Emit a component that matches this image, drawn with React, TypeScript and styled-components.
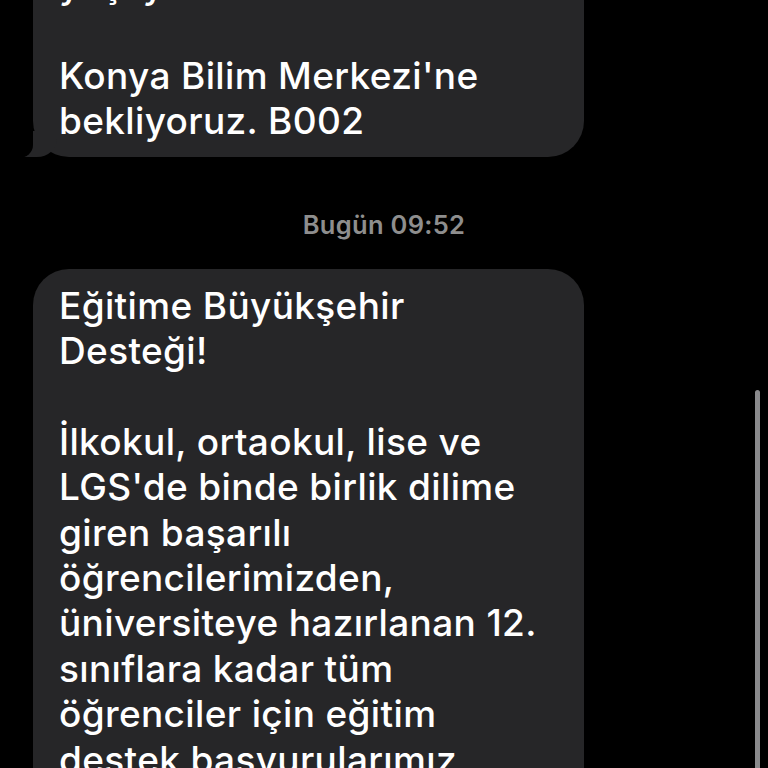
import React from 'react'
import styled, { createGlobalStyle } from 'styled-components'

const Global = createGlobalStyle`
  html, body {
    margin: 0;
    padding: 0;
    background: #000;
  }
  #root {
    width: 768px;
    height: 768px;
  }
`

const Screen = styled.div`
  position: relative;
  width: 768px;
  height: 768px;
  overflow: hidden;
  background: #000;
  font-family: Inter, "Noto Sans", sans-serif;
`

const Thread = styled.div`
  display: flex;
  flex-direction: column;
  align-items: flex-start;
  padding: 0 0 0 33px;
  margin-top: -52px;
`

const Bubble = styled.div<{ $tail?: boolean }>`
  position: relative;
  box-sizing: border-box;
  width: 551px;
  padding: 14px 26px 13px;
  background: #262628;
  border-radius: 36px;
  color: #fff;
  font-size: 37px;
  font-weight: 500;
  line-height: 45.4px;
  letter-spacing: 0.35px;

  ${({ $tail }) =>
    $tail &&
    `
    &::before {
      content: '';
      position: absolute;
      left: -10px;
      bottom: 0;
      width: 34px;
      height: 26px;
      background: #262628;
      border-bottom-right-radius: 20px 18px;
    }
    &::after {
      content: '';
      position: absolute;
      left: -26px;
      bottom: -1px;
      width: 26px;
      height: 28px;
      background: #000;
      border-bottom-right-radius: 14px 13px;
    }
  `}
`

const Line = styled.div`
  white-space: nowrap;
  min-height: 45.4px;
`

const Stamp = styled.div`
  align-self: center;
  margin: 53px 0 29px -33px;
  color: #8e8e8e;
  font-size: 25.5px;
  font-weight: 600;
  line-height: 30px;
  letter-spacing: 0.3px;
`

const ScrollBar = styled.div`
  position: absolute;
  right: 8px;
  top: 390px;
  width: 5px;
  height: 420px;
  border-radius: 3px;
  background: #8a8a8c;
`

const first = ['yaşayın.', '', "Konya Bilim Merkezi'ne", 'bekliyoruz. B002']

const second = [
  'Eğitime Büyükşehir',
  'Desteği!',
  '',
  'İlkokul, ortaokul, lise ve',
  "LGS'de binde birlik dilime",
  'giren başarılı',
  'öğrencilerimizden,',
  'üniversiteye hazırlanan 12.',
  'sınıflara kadar tüm',
  'öğrenciler için eğitim',
  'destek başvurularımız',
  'başladı.',
]

export default function App() {
  return (
    <Screen>
      <Global />
      <Thread>
        <Bubble $tail>
          {first.map((t, i) => (
            <Line key={i}>{t}</Line>
          ))}
        </Bubble>
        <Stamp>Bugün 09:52</Stamp>
        <Bubble>
          {second.map((t, i) => (
            <Line key={i}>{t}</Line>
          ))}
        </Bubble>
      </Thread>
      <ScrollBar />
    </Screen>
  )
}
